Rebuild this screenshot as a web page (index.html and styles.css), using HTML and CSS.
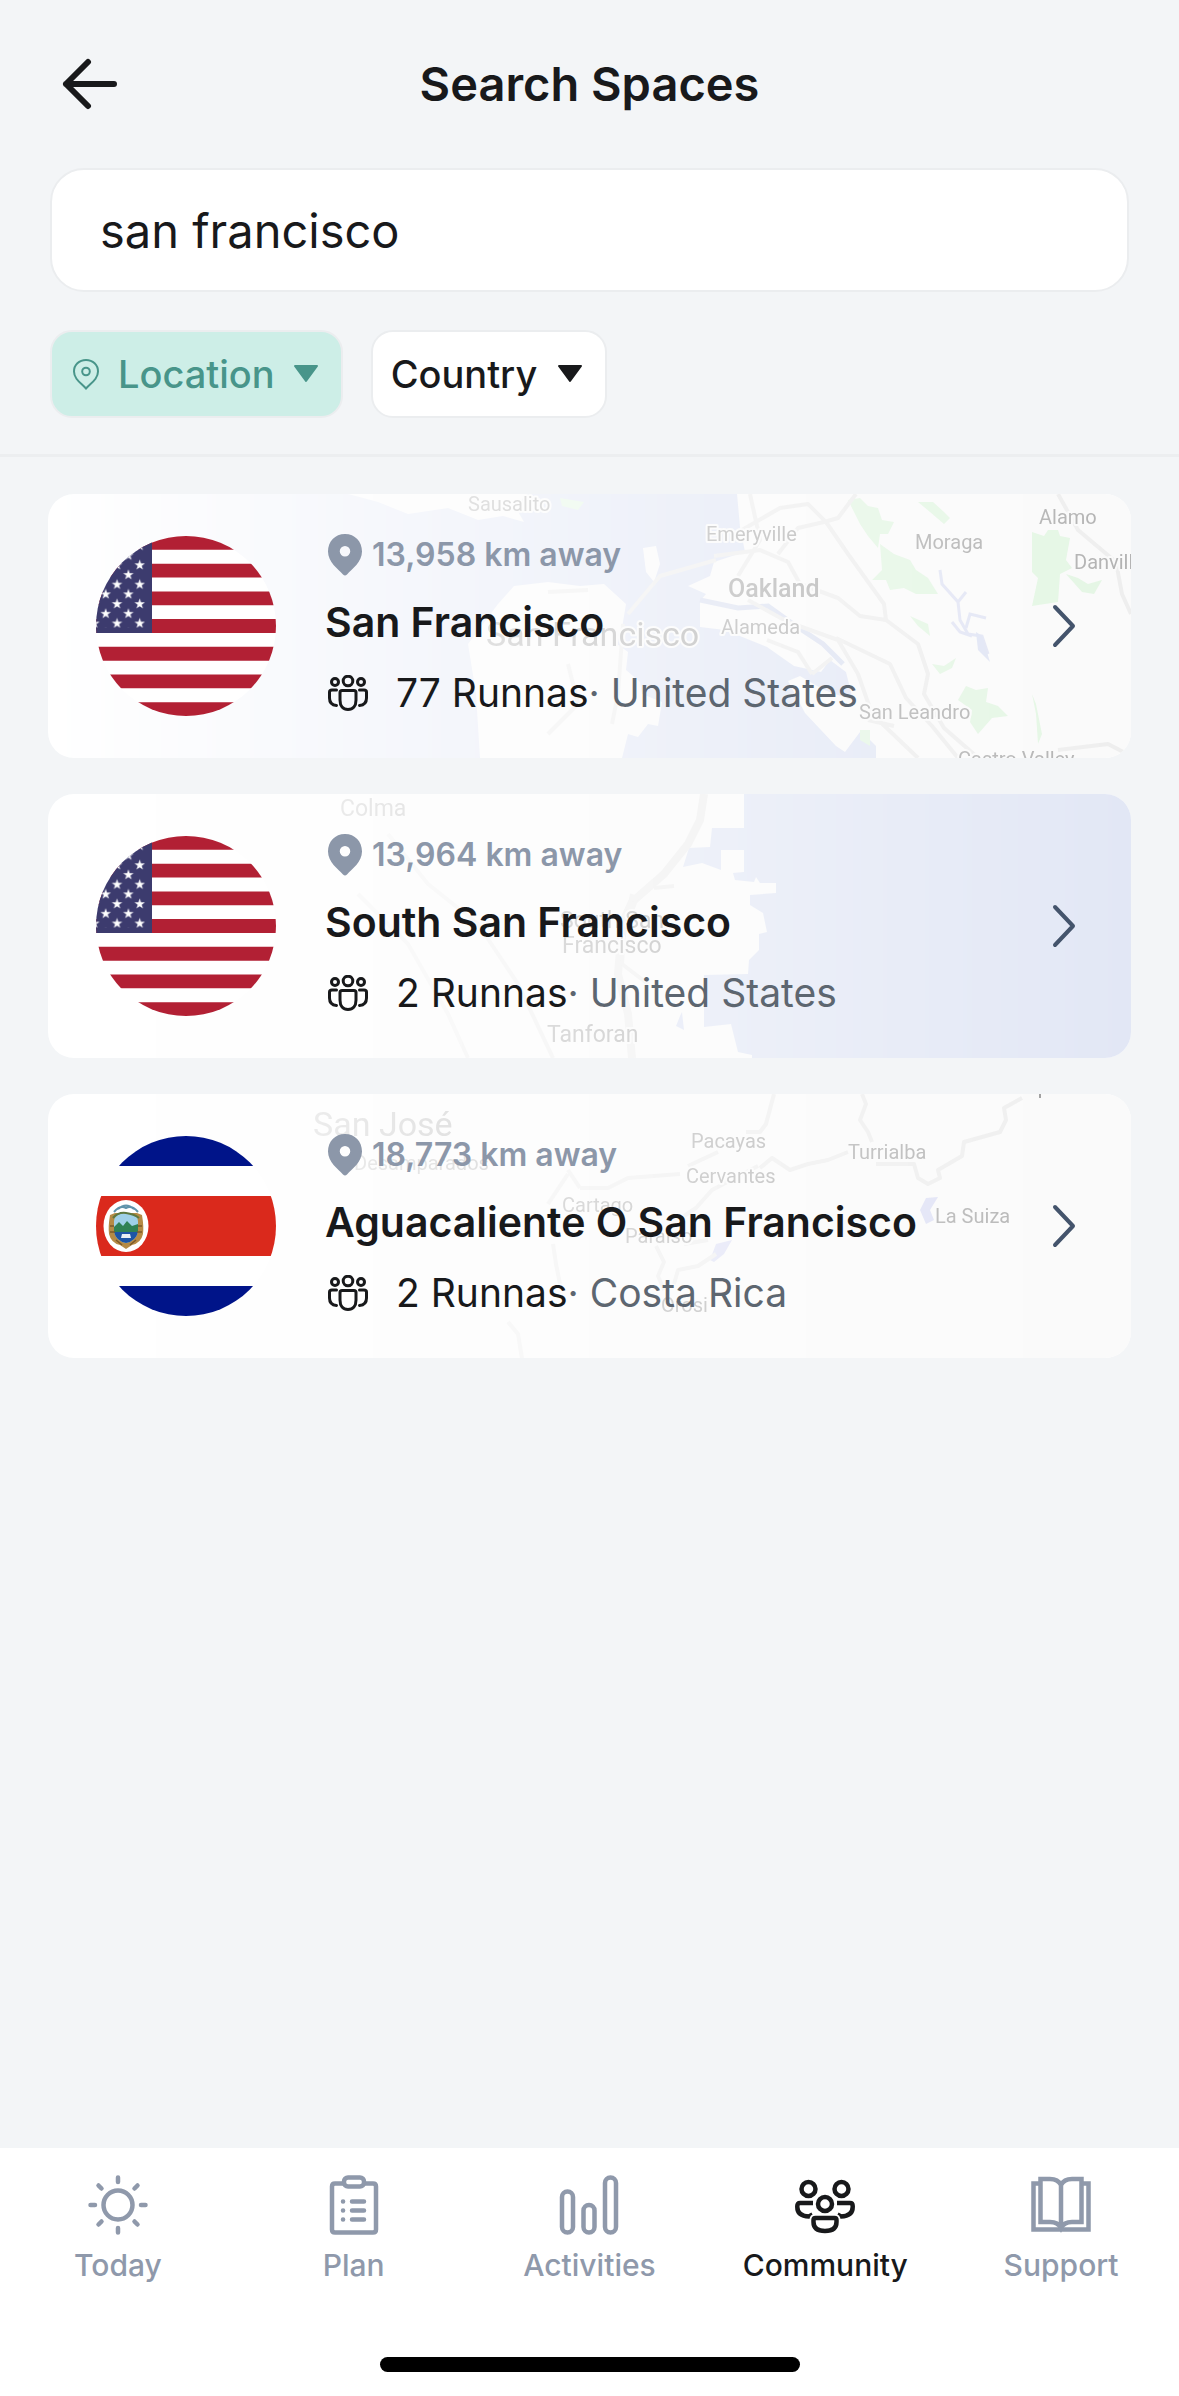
FILE: index.html
```html
<!DOCTYPE html>
<html lang="en">
<head>
    <meta charset="UTF-8">
    <meta name="viewport" content="width=device-width, initial-scale=1">
    <title>Search Spaces</title>
    <link rel="stylesheet" href="styles.css">
</head>
<body>
    <!-- shared shapes -->
    <svg class="defs" width="0" height="0" aria-hidden="true">
        <defs>
            <path id="star" d="M0-5.5 1.25-1.7H5.25L2 .65 3.25 4.45 0 2.1-3.25 4.45-2 .65-5.25-1.7H-1.25Z" fill="#fff"/>
            <pattern id="stars" width="22.68" height="19.44" patternUnits="userSpaceOnUse">
                <use href="#star" x="11.34" y="9.72"/>
                <use href="#star"/>
                <use href="#star" x="22.68"/>
                <use href="#star" y="19.44"/>
                <use href="#star" x="22.68" y="19.44"/>
            </pattern>
            <symbol id="flag-us" viewBox="81 0 180 180">
                <rect width="342" height="180" fill="#fff"/>
                <path d="M0 6.92H342M0 34.6H342M0 62.3H342M0 90H342M0 117.7H342M0 145.4H342M0 173.1H342" stroke="#b22034" stroke-width="13.85"/>
                <rect width="137" height="97" fill="#3c3b6e"/>
                <rect y="4" width="130" height="88" fill="url(#stars)"/>
            </symbol>
            <symbol id="flag-cr" viewBox="0 0 180 180">
                <rect width="180" height="30" fill="#001489"/>
                <rect y="30" width="180" height="30" fill="#fff"/>
                <rect y="60" width="180" height="60" fill="#da291c"/>
                <rect y="120" width="180" height="30" fill="#fff"/>
                <rect y="150" width="180" height="30" fill="#001489"/>
                <ellipse cx="30" cy="90" rx="22.5" ry="26" fill="#fff"/>
                <path d="M14 79Q12 91 13 98Q15 107 24 109L30 113 36 109Q45 107 47 98Q48 91 46 79L41 77H19Z" fill="#b58a45"/>
                <path d="M18 85Q19 77 30 77T42 85V96Q40 105 30 107Q20 105 18 96Z" fill="#9fd0e8"/>
                <path d="M18 91L23 86 27 90 31 85 36 90 42 88V96H18Z" fill="#2f8154"/>
                <path d="M18 96H42Q40 105 30 107Q20 105 18 96Z" fill="#1d55a5"/>
                <path d="M26 98H34L35 102H25Z" fill="#e8eef4"/>
                <path d="M18 76Q24 69 30 72Q36 69 42 76M22 73Q30 66 38 73" fill="none" stroke="#5f93ab" stroke-width="2"/>
                <path d="M17 82Q22 76 30 77T43 82" fill="none" stroke="#5d7840" stroke-width="2"/>
                <path d="M14 90H18M14 96H19M46 90H42M46 96H41M20 104L26 109M40 104L34 109" stroke="#7b592a" stroke-width="1.5"/>
            </symbol>
            <symbol id="pin" viewBox="0 0 34 42">
                <path d="M17 0C7 0 0 7.500 0 17.500C0 28 10 35 15 40.500Q17 42.500 19 40.500C24 35 34 28 34 17.500C34 7.500 27 0 17 0ZM17 12A5 5 0 1 1 17 22.500A5 5 0 1 1 17 12Z" fill="currentColor" fill-rule="evenodd"/>
            </symbol>
            <symbol id="runnas" viewBox="0 0 40 36">
                <g fill="none" stroke="currentColor" stroke-width="3" stroke-linecap="round">
                    <circle cx="20" cy="6" r="4.800"/>
                    <circle cx="7" cy="7" r="3.500"/>
                    <circle cx="33" cy="7" r="3.500"/>
                    <path d="M14 15.500H26Q28 15.500 28 17.500V25C28 31 25 34.500 20 34.500S12 31 12 25V17.500Q12 15.500 14 15.500Z"/>
                    <path d="M8.500 15H4Q1.500 15 1.500 17V23Q1.500 30 8.500 30.500"/>
                    <path d="M31.500 15H36Q38.500 15 38.500 17V23Q38.500 30 31.500 30.500"/>
                </g>
            </symbol>
            <symbol id="chevron" viewBox="0 0 26 46">
                <path d="M4 4L22 23L4 42" fill="none" stroke="currentColor" stroke-width="4" stroke-linecap="round" stroke-linejoin="round"/>
            </symbol>
        </defs>
    </svg>

    <header class="top">
        <div class="titlebar">
            <button class="back" type="button" aria-label="Back">
                <svg width="56" height="52" viewBox="0 0 56 52"><path d="M26 4L4 26L26 48M4 26H52" fill="none" stroke="currentColor" stroke-width="6" stroke-linecap="round" stroke-linejoin="round"/></svg>
            </button>
            <h1>Search Spaces</h1>
        </div>
        <input class="search" type="text" value="san francisco" aria-label="Search spaces">
        <div class="filters">
            <button class="chip active" type="button">
                <svg width="28" height="32" viewBox="0 0 28 32"><path d="M14 2C7 2 2 7 2 13.500C2 21 9 25 14 30.500C19 25 26 21 26 13.500C26 7 21 2 14 2Z" fill="none" stroke="currentColor" stroke-width="2"/><circle cx="14" cy="13.500" r="3.800" fill="none" stroke="currentColor" stroke-width="2"/></svg>
                <span>Location</span>
                <svg class="caret" width="26" height="18" viewBox="0 0 26 18"><path d="M2 1H24L13 16Z" fill="currentColor" stroke="currentColor" stroke-width="2" stroke-linejoin="round"/></svg>
            </button>
            <button class="chip" type="button">
                <span>Country</span>
                <svg class="caret" width="26" height="18" viewBox="0 0 26 18"><path d="M2 1H24L13 16Z" fill="currentColor" stroke="currentColor" stroke-width="2" stroke-linejoin="round"/></svg>
            </button>
        </div>
    </header>

    <main class="results">
        <a class="card" href="#">
            <svg class="map" viewBox="0 0 1083 264" preserveAspectRatio="xMaxYMid slice" aria-hidden="true">
                <rect width="1083" height="264" fill="#e2e7f5"/>
                <g class="land">
                    <path d="M300 0H478L468 14 476 28 455 22 430 26 400 14 360 20 330 8Z"/>
                    <path d="M432 264L428 200 420 150 450 110 466 92 500 88 532 92 556 90 578 110 574 134 566 148 580 158 578 176 592 188 594 200 614 208 610 232 600 230 590 243 580 240 574 264Z"/>
                    <path d="M595 54L608 52 612 70 606 88 598 78Z"/>
                    <path d="M689 0L692 33 697 58 684 62 666 68 662 82 640 92 658 100 652 107 652 133 677 136 719 153 746 172 773 178 782 166 798 178 806 210 812 236 828 252V264H1083V0Z"/>
                    <path d="M740 187L752 182 776 196 815 210 812 238 797 258 788 252 757 219Z"/>
                </g>
                <path d="M652 106L690 114 720 112 745 130 775 150 795 170" fill="none" stroke="#dde2f1" stroke-width="5"/>
                <g fill="#e4f6e4">
                    <path d="M800 6L812 4 820 12 830 14 834 26 846 28 840 40 832 40 830 54 820 42 812 30Z"/>
                    <path d="M870 8L885 8 896 18 902 24 896 30 882 18Z"/>
                    <path d="M832 50L846 60 862 66 868 76 880 84 890 100 868 100 856 94 842 96 838 86 824 86 834 76Z"/>
                    <path d="M984 38L996 42 1000 36 1010 36 1012 42 1022 44 1018 66 1024 74 1012 80 1010 108 984 112 990 84 984 78Z"/>
                    <path d="M1018 80L1030 84 1040 90 1054 86 1046 100 1034 98Z"/>
                    <path d="M862 122L880 130 882 142 870 132Z"/>
                    <path d="M884 170L896 172 908 164 904 174 892 180Z"/>
                    <path d="M910 206L918 192 928 196 940 194 938 208 950 212 960 222 944 224 930 240 922 228 924 216Z"/>
                    <path d="M984 200L988 210 994 240 990 250 988 220ZM812 236L822 236V252L812 246Z"/>
                    <path d="M512 4L536 8 530 16 514 12Z"/>
                </g>
                <g class="road">
                    <path d="M702 0L712 46 690 82M694 36L732 14 760 10 778 28 800 60 836 110 838 126 870 150 880 180 876 200 896 234 928 262"/>
                    <path d="M808 0L790 24 776 28 750 34 730 60M666 62L712 56 740 68 752 90 790 104 812 122 838 126"/>
                    <path d="M700 106L740 128 790 146 810 180 824 220 870 264M788 144L842 170 858 204 884 232 910 264M820 226L846 232"/>
                    <path d="M719 146L750 158 764 180M784 164L764 180"/>
                    <path d="M1010 0L1030 36 1068 68 1074 100 1083 120M1010 256L1060 250 1083 262"/>
                    <path d="M500 98L540 96M520 170L530 210 500 240M575 130L570 200 564 230M580 120L612 82 668 66"/>
                </g>
                <path d="M892 76L894 90 910 108 912 126 920 140 934 142 940 160M910 108L918 98M918 134L922 120 938 124M904 128L912 138 924 142" fill="none" stroke="#e2e5f4" stroke-width="3"/>
                <path d="M928 138L934 142 942 168 930 156Z" fill="#e0e4f4"/>
                <g class="place">
                    <text x="420" y="17">Sausalito</text>
                    <text x="658" y="47">Emeryville</text>
                    <text class="town" x="680" y="103">Oakland</text>
                    <text class="city" x="438" y="152">San Francisco</text>
                    <text x="673" y="140">Alameda</text>
                    <text x="867" y="55">Moraga</text>
                    <text x="991" y="30">Alamo</text>
                    <text x="1026" y="75">Danville</text>
                    <text x="811" y="225">San Leandro</text>
                    <text x="910" y="272">Castro Valley</text>
                </g>
            </svg>
            <svg class="flag" viewBox="0 0 180 180" role="img" aria-label="United States flag"><use href="#flag-us" width="180" height="180"/></svg>
            <div class="info">
                <p class="distance"><svg width="34" height="42"><use href="#pin"/></svg>13,958 km away</p>
                <h2>San Francisco</h2>
                <p class="meta"><svg width="40" height="36"><use href="#runnas"/></svg><span>77 Runnas<span class="country">· United States</span></span></p>
            </div>
            <svg class="chevron" width="26" height="46"><use href="#chevron"/></svg>
        </a>

        <a class="card" href="#">
            <svg class="map" viewBox="0 0 1083 264" preserveAspectRatio="xMaxYMid slice" aria-hidden="true">
                <rect width="1083" height="264" fill="#e2e7f5"/>
                <g class="land">
                    <path d="M0 0H696V34H664L662 53 641 54 635 73 654 69 673 76V56H696V78L685 79 687 86 706 88 708 83 712 89H728V99L702 101V111L715 119 719 138 711 140V156L701 166 700 180 656 181V233L683 230 690 258 704 261V264H0Z"/>
                </g>
                <path d="M632 222L628 232 636 236 634 218Z" fill="#dfe4f4"/>
                <g class="road">
                    <path d="M656 0L652 26 640 50 616 80 584 108 574 130 570 180 580 220 584 264" stroke-width="8"/>
                    <path d="M340 40L380 90 430 130 470 190 505 264M310 100L360 150 400 220 420 264M606 94L626 92M584 100L580 120M590 100L576 140 574 170 600 190"/>
                </g>
                <g class="place near">
                    <text x="292" y="22">Colma</text>
                    <text x="512" y="134">South San</text>
                    <text x="514" y="159">Francisco</text>
                    <text x="499" y="248">Tanforan</text>
                </g>
            </svg>
            <svg class="flag" viewBox="0 0 180 180" role="img" aria-label="United States flag"><use href="#flag-us" width="180" height="180"/></svg>
            <div class="info">
                <p class="distance"><svg width="34" height="42"><use href="#pin"/></svg>13,964 km away</p>
                <h2>South San Francisco</h2>
                <p class="meta"><svg width="40" height="36"><use href="#runnas"/></svg><span>2 Runnas<span class="country">· United States</span></span></p>
            </div>
            <svg class="chevron" width="26" height="46"><use href="#chevron"/></svg>
        </a>

        <a class="card" href="#">
            <svg class="map" viewBox="0 0 1083 264" preserveAspectRatio="xMaxYMid slice" aria-hidden="true">
                <rect class="land" width="1083" height="264"/>
                <g fill="#dfe1f5">
                    <path d="M872 116L878 104 890 103 882 116 886 126 878 130Z"/>
                    <path d="M662 166L668 150 684 146 676 160 666 168Z"/>
                </g>
                <g class="road">
                    <path d="M726 0L718 30 712 38H698M532 94L560 94 580 84 632 80M640 72L670 58M712 74L724 64 742 76 760 70 780 66 800 58M710 72L664 96 648 114 636 122M636 150L660 146"/>
                    <path d="M814 0L818 10 812 26 820 38 824 48M828 70L866 70 870 84 880 90 892 84 890 76 914 62 916 48 952 38 958 26 956 14 974 4"/>
                    <path d="M608 152L616 168 610 182 616 196M626 190L630 176 650 172 668 160M520 76L532 94M505 150L508 170 512 190M460 228L470 240 474 264M520 80L500 110"/>
                </g>
                <path d="M992 0V4" stroke="#999" stroke-width="2"/>
                <g class="place">
                    <text class="city" x="265" y="42">San José</text>
                    <text x="306" y="76">Desamparados</text>
                    <text x="514" y="118">Cartago</text>
                    <text x="577" y="149">Paraíso</text>
                    <text x="643" y="54">Pacayas</text>
                    <text x="638" y="89">Cervantes</text>
                    <text x="800" y="65">Turrialba</text>
                    <text x="887" y="129">La Suiza</text>
                    <text x="613" y="218">Orosi</text>
                </g>
            </svg>
            <svg class="flag" viewBox="0 0 180 180" role="img" aria-label="Costa Rica flag"><use href="#flag-cr" width="180" height="180"/></svg>
            <div class="info">
                <p class="distance"><svg width="34" height="42"><use href="#pin"/></svg>18,773 km away</p>
                <h2>Aguacaliente O San Francisco</h2>
                <p class="meta"><svg width="40" height="36"><use href="#runnas"/></svg><span>2 Runnas<span class="country">· Costa Rica</span></span></p>
            </div>
            <svg class="chevron" width="26" height="46"><use href="#chevron"/></svg>
        </a>
    </main>

    <footer class="bottom">
        <nav class="tabs">
            <a href="#">
                <svg viewBox="0 0 60 60"><g fill="none" stroke="currentColor" stroke-width="4.500" stroke-linecap="round"><circle cx="30" cy="30" r="14.500"/><path d="M30 2.500V7M30 53V57.500M2.500 30H7M53 30H57.500M10.500 10.500L13.500 13.500M46.500 46.500L49.500 49.500M10.500 49.500L13.500 46.500M46.500 13.500L49.500 10.500"/></g></svg>
                Today
            </a>
            <a href="#">
                <svg viewBox="0 0 60 60"><g fill="none" stroke="currentColor" stroke-width="4.500" stroke-linecap="round" stroke-linejoin="round"><path d="M19 8.500H11Q8 8.500 8 11.500V54.500Q8 57.500 11 57.500H49Q52 57.500 52 54.500V11.500Q52 8.500 49 8.500H41"/><rect x="20" y="2.500" width="20" height="9" rx="4"/><path d="M28 26.500H40M28 35.500H40M28 44.500H40M19 26.500H19.100M19 35.500H19.100M19 44.500H19.100"/></g></svg>
                Plan
            </a>
            <a href="#">
                <svg viewBox="0 0 60 60"><g fill="none" stroke="currentColor" stroke-width="4.500"><rect x="3" y="16.500" width="11" height="41" rx="5.500"/><rect x="24.500" y="30" width="11" height="27.500" rx="5.500"/><rect x="46" y="2.500" width="11" height="55" rx="5.500"/></g></svg>
                Activities
            </a>
            <a class="current" href="#" aria-current="page">
                <svg viewBox="0 0 60 60"><g fill="none" stroke="currentColor" stroke-width="4.500"><circle cx="13.500" cy="14" r="7"/><circle cx="46.500" cy="14" r="7"/><circle cx="30" cy="29" r="7"/><path d="M18 28H5Q2.300 28 2.300 31V32Q2.300 41 14 41.500L17.500 39.500M42 28H55Q57.700 28 57.700 31V32Q57.700 41 46 41.500L42.500 39.500"/><path d="M20.500 43H39.500Q41.500 43 41.500 45V47Q41.500 56 30 56T18.500 47V45Q18.500 43 20.500 43Z" stroke="#fff" stroke-width="8"/><path d="M20.500 43H39.500Q41.500 43 41.500 45V47Q41.500 56 30 56T18.500 47V45Q18.500 43 20.500 43Z"/></g></svg>
                Community
            </a>
            <a href="#">
                <svg viewBox="0 0 60 60"><g fill="none" stroke="currentColor" stroke-width="4.500"><path d="M30 10Q27 4 19 4H9.500V47H19Q27 47 30 53Q33 47 41 47H50.500V4H41Q33 4 30 10V53"/><path d="M9.500 8.500H2.500V54.500H57.500V8.500H50.500"/></g></svg>
                Support
            </a>
        </nav>
        <div class="home-bar"></div>
    </footer>
</body>
</html>
```
FILE: styles.css
```css
* {
    box-sizing: border-box;
}
body {
    margin: 0;
    min-height: 100vh;
    display: flex;
    flex-direction: column;
    background: #f3f5f7;
    color: #18191b;
    font-family: Inter, "Liberation Sans", sans-serif;
}
h1, h2, p {
    margin: 0;
}
button {
    font-family: inherit;
    color: inherit;
    cursor: pointer;
}
a {
    color: inherit;
    text-decoration: none;
}
svg {
    display: block;
    flex-shrink: 0;
}
.defs {
    position: absolute;
}

/* header */
.top {
    padding: 48px 50px 36px;
    border-bottom: 3px solid #eceef0;
}
.titlebar {
    display: grid;
    grid-template-columns: 80px 1fr 80px;
    align-items: center;
    height: 72px;
}
.back {
    padding: 0 0 0 12px;
    border: none;
    background: none;
}
h1 {
    font-size: 47px;
    line-height: 72px;
    font-weight: 600;
    text-align: center;
}
.search {
    display: block;
    width: 100%;
    height: 124px;
    margin-top: 48px;
    padding: 0 48px;
    border: 2px solid #ebedef;
    border-radius: 34px;
    background: #fff;
    color: inherit;
    font-family: inherit;
    font-size: 47px;
}
.filters {
    display: flex;
    gap: 28px;
    margin-top: 38px;
}
.chip {
    display: flex;
    align-items: center;
    gap: 20px;
    height: 88px;
    padding: 0 22px 0 18px;
    border: 2px solid #ebedef;
    border-radius: 22px;
    background: #fff;
    font-size: 38px;
    font-weight: 500;
}
.chip.active {
    gap: 18px;
    padding-left: 20px;
    background: #cdeee7;
    color: #48958a;
}

/* results */
.results {
    flex: 1;
    display: flex;
    flex-direction: column;
    gap: 36px;
    padding: 37px 48px;
}
.card {
    position: relative;
    display: flex;
    align-items: center;
    min-height: 264px;
    padding: 34px 54px 34px 48px;
    border-radius: 26px;
    background: #fff;
    overflow: hidden;
}
/* the map fades out towards the flag */
.map {
    position: absolute;
    inset: 0;
    width: 100%;
    height: 100%;
    -webkit-mask-image: linear-gradient(to right, transparent, #000);
    mask-image: linear-gradient(to right, transparent, #000);
}
.land {
    fill: #fafafa;
}
.road {
    fill: none;
    stroke: #eee;
    stroke-width: 4px;
    stroke-linejoin: round;
}
.place {
    font-family: Roboto, sans-serif;
    font-size: 20px;
    fill: #b2b2b2;
    stroke: #fafafa;
    stroke-width: 4px;
    stroke-linejoin: round;
    paint-order: stroke;
}
.near {
    font-size: 23px;
}
.town {
    font-size: 25px;
    font-weight: 500;
}
.city {
    font-size: 34px;
}
.flag {
    position: relative;
    width: 180px;
    height: 180px;
    border-radius: 50%;
}
.info {
    position: relative;
    flex: 1;
    display: flex;
    flex-direction: column;
    gap: 13px;
    margin-left: 49px;
}
.distance {
    display: flex;
    align-items: center;
    gap: 10px;
    padding-left: 3px;
    color: #8c97a9;
    font-size: 32px;
    line-height: 52px;
    font-weight: 600;
}
h2 {
    font-size: 41px;
    line-height: 56px;
    font-weight: 600;
}
.meta {
    display: flex;
    align-items: center;
    gap: 28px;
    padding-left: 3px;
    font-size: 39px;
    line-height: 60px;
}
.country {
    color: #5d6670;
}
.chevron {
    position: relative;
    color: #44546c;
}

/* tab bar */
.bottom {
    background: #fff;
    padding: 27px 0 24px;
}
.tabs {
    display: grid;
    grid-template-columns: repeat(5, 1fr);
}
.tabs a {
    display: flex;
    flex-direction: column;
    align-items: center;
    gap: 10px;
    color: #8f99ab;
    font-size: 30px;
    line-height: 40px;
    font-weight: 500;
}
.tabs svg {
    width: 60px;
    height: 60px;
}
.tabs .current {
    color: #18191b;
}
.home-bar {
    width: 420px;
    height: 15px;
    margin: 72px auto 0;
    border-radius: 8px;
    background: #000;
}
```
